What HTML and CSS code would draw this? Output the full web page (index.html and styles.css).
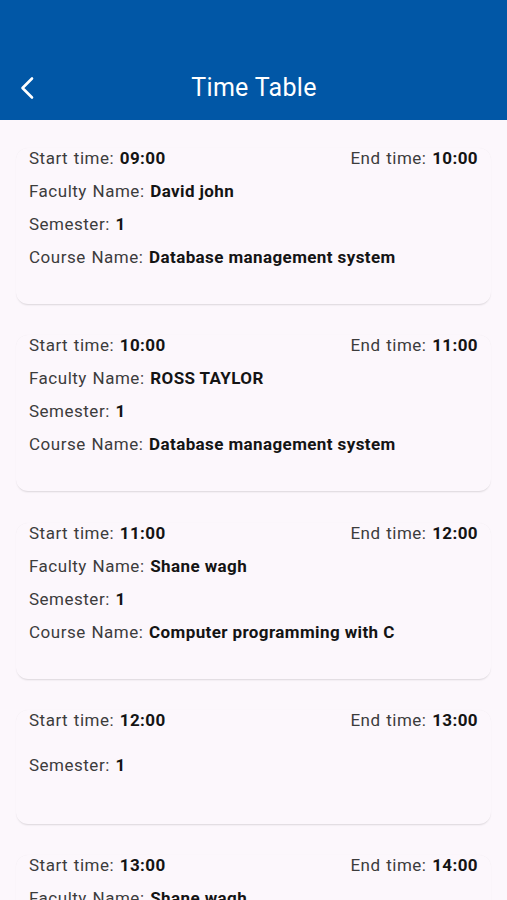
FILE: index.html
```html
<!DOCTYPE html>
<html lang="en">
<head>
<meta charset="utf-8">
<title>Time Table</title>
<link rel="stylesheet" href="styles.css">
</head>
<body>
<header class="appbar">
  <div class="toolbar">
    <button class="back" aria-label="Back">
      <svg width="24" height="24" viewBox="0 0 24 24"><polyline points="17,2.5 7.5,12 17,21.5" fill="none" stroke="#fff" stroke-width="2.6" stroke-linecap="round" stroke-linejoin="round"/></svg>
    </button>
    <h1 class="title">Time Table</h1>
  </div>
</header>
<main class="list">
  <section class="card">
    <div class="row split"><p>Start time: <b>09:00</b></p><p>End time: <b>10:00</b></p></div>
    <div class="row"><p>Faculty Name: <b>David john</b></p></div>
    <div class="row"><p>Semester: <b>1</b></p></div>
    <div class="row"><p>Course Name: <b>Database management system</b></p></div>
  </section>
  <section class="card">
    <div class="row split"><p>Start time: <b>10:00</b></p><p>End time: <b>11:00</b></p></div>
    <div class="row"><p>Faculty Name: <b>ROSS TAYLOR</b></p></div>
    <div class="row"><p>Semester: <b>1</b></p></div>
    <div class="row"><p>Course Name: <b>Database management system</b></p></div>
  </section>
  <section class="card">
    <div class="row split"><p>Start time: <b>11:00</b></p><p>End time: <b>12:00</b></p></div>
    <div class="row"><p>Faculty Name: <b>Shane wagh</b></p></div>
    <div class="row"><p>Semester: <b>1</b></p></div>
    <div class="row"><p>Course Name: <b>Computer programming with C</b></p></div>
  </section>
  <section class="card">
    <div class="row split"><p>Start time: <b>12:00</b></p><p>End time: <b>13:00</b></p></div>
    <div class="row"></div>
    <div class="row"><p>Semester: <b>1</b></p></div>
    <div class="row"></div>
  </section>
  <section class="card">
    <div class="row split"><p>Start time: <b>13:00</b></p><p>End time: <b>14:00</b></p></div>
    <div class="row"><p>Faculty Name: <b>Shane wagh</b></p></div>
    <div class="row"><p>Semester: <b>1</b></p></div>
    <div class="row"><p>Course Name: <b>Computer programming with C</b></p></div>
  </section>
</main>
</body>
</html>
```
FILE: styles.css
```css
html, body {
  margin: 0;
  padding: 0;
  background: #fcf7fc;
  font-family: Roboto, "Noto Sans", "Liberation Sans", sans-serif;
  overflow: hidden;
  height: 900px;
}
.appbar {
  background: #0157a6;
  height: 120px;
  padding-top: 56px;
  box-sizing: border-box;
}
.toolbar {
  height: 64px;
  display: flex;
  align-items: center;
  justify-content: center;
  position: relative;
}
.back {
  position: absolute;
  left: 15px;
  top: 20px;
  width: 24px;
  height: 24px;
  padding: 0;
  border: 0;
  background: none;
  display: flex;
}
.title {
  margin: 0 0 0 1px;
  color: #fff;
  font-size: 25px;
  font-weight: 400;
  letter-spacing: 0.3px;
  line-height: 30px;
}
.list {
  display: flex;
  flex-direction: column;
  gap: 31.3px;
  padding: 28px 16px 0;
}
.card {
  background: #fcf7fc;
  border-radius: 12px;
  box-shadow: 0 2px 2px -1px rgba(0,0,0,0.13), 0 0 1px rgba(0,0,0,0.06);
  padding: 0 13px 24px;
  flex-shrink: 0;
}
.row {
  padding-bottom: 12px;
}
.row.split {
  display: flex;
  justify-content: space-between;
}
.row p {
  margin: 0;
  font-size: 17px;
  line-height: 21px;
  color: #3c3c3c;
  letter-spacing: 0.5px;
  word-spacing: 1px;
}
.row b {
  color: #141414;
  font-weight: 700;
  letter-spacing: 0.4px;
  word-spacing: 0;
}
```
